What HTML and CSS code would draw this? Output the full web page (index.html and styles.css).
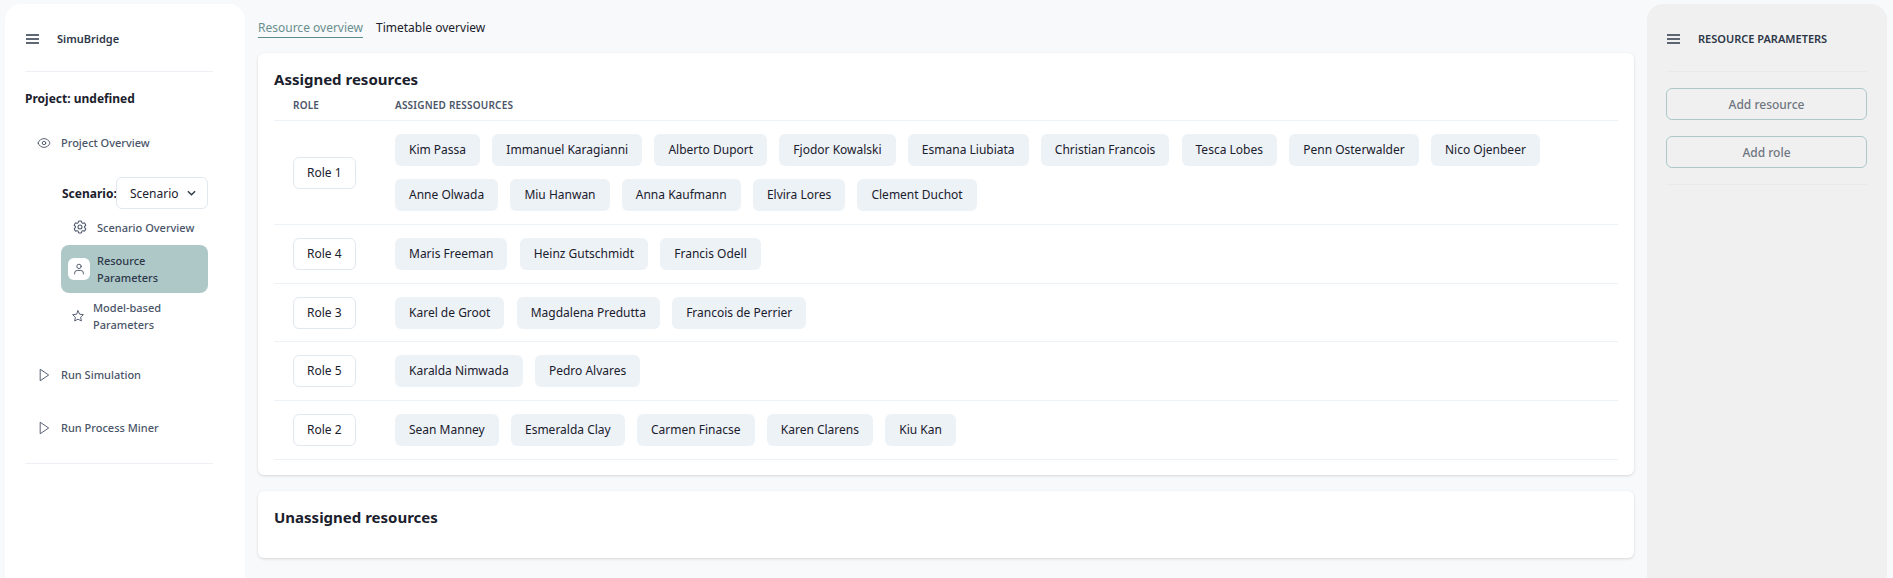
FILE: index.html
```html
<!DOCTYPE html>
<html lang="en">
<head>
    <meta charset="UTF-8">
    <meta name="viewport" content="width=device-width, initial-scale=1.0">
    <title>SimuBridge</title>
    <link rel="stylesheet" href="styles.css">
</head>
<body>
    <div class="app">
        <aside class="sidebar">
            <div class="side-head">
                <svg class="burger" viewBox="0 0 13 10"><path d="M0 1h13M0 5h13M0 9h13"/></svg>
                <span class="brand">SimuBridge</span>
            </div>
            <div class="project">Project: undefined</div>
            <div class="nav-item overview">
                <svg class="nav-icon" viewBox="0 0 24 24"><path d="M2.036 12.322a1.012 1.012 0 010-.639C3.423 7.51 7.36 4.5 12 4.5c4.638 0 8.573 3.007 9.963 7.178.07.207.07.431 0 .639C20.577 16.49 16.64 19.5 12 19.5c-4.638 0-8.573-3.007-9.963-7.178z"/><circle cx="12" cy="12" r="3"/></svg>
                <span>Project Overview</span>
            </div>
            <div class="scenario-row">
                <span class="scenario-label">Scenario:</span>
                <div class="scenario-select">
                    <span class="scenario-value">Scenario 1</span>
                    <svg class="chevron" viewBox="0 0 10 6"><path d="M1 1l4 4 4-4"/></svg>
                </div>
            </div>
            <div class="sub-item gear-item">
                <svg class="nav-icon gear-icon" viewBox="0 0 24 24"><path d="M9.594 3.94c.09-.542.56-.94 1.11-.94h2.593c.55 0 1.02.398 1.11.94l.213 1.281c.063.374.313.686.645.87.074.04.147.083.22.127.324.196.72.257 1.075.124l1.217-.456a1.125 1.125 0 011.37.49l1.296 2.247a1.125 1.125 0 01-.26 1.431l-1.003.827c-.293.24-.438.613-.431.992a6.759 6.759 0 010 .255c-.007.378.138.75.43.99l1.005.828c.424.35.534.954.26 1.43l-1.298 2.247a1.125 1.125 0 01-1.369.491l-1.217-.456c-.355-.133-.75-.072-1.076.124a6.57 6.57 0 01-.22.128c-.331.183-.581.495-.644.869l-.213 1.28c-.09.543-.56.941-1.11.941h-2.594c-.55 0-1.02-.398-1.11-.94l-.213-1.281c-.062-.374-.312-.686-.644-.87a6.52 6.52 0 01-.22-.127c-.325-.196-.72-.257-1.076-.124l-1.217.456a1.125 1.125 0 01-1.369-.49l-1.297-2.247a1.125 1.125 0 01.26-1.431l1.004-.827c.292-.24.437-.613.43-.992a6.932 6.932 0 010-.255c.007-.378-.138-.75-.43-.99l-1.004-.828a1.125 1.125 0 01-.26-1.43l1.297-2.247a1.125 1.125 0 011.37-.491l1.216.456c.356.133.751.072 1.076-.124.072-.044.146-.087.22-.128.332-.183.582-.495.644-.869l.214-1.281z"/><circle cx="12" cy="12" r="3"/></svg>
                <span>Scenario Overview</span>
            </div>
            <div class="sub-item active">
                <span class="icon-box">
                    <svg class="nav-icon" viewBox="0 0 24 24"><circle cx="12" cy="7.500" r="3.750"/><path d="M4.500 20.500v-1.500a4.500 4.500 0 0 1 4.500-4.500h6a4.500 4.500 0 0 1 4.500 4.500v1.500"/></svg>
                </span>
                <span>Resource<br>Parameters</span>
            </div>
            <div class="sub-item star-item">
                <svg class="nav-icon" viewBox="0 0 24 24"><path d="M12 3l2.800 5.900 6.400.8-4.700 4.400 1.200 6.400-5.700-3.100-5.700 3.100 1.200-6.400-4.700-4.400 6.400-.8z"/></svg>
                <span>Model-based<br>Parameters</span>
            </div>
            <div class="nav-item run-sim">
                <svg class="nav-icon" viewBox="0 0 24 24"><path d="M6 2.500l14 9.500-14 9.500z"/></svg>
                <span>Run Simulation</span>
            </div>
            <div class="nav-item run-miner">
                <svg class="nav-icon" viewBox="0 0 24 24"><path d="M6 2.500l14 9.500-14 9.500z"/></svg>
                <span>Run Process Miner</span>
            </div>
            <div class="side-rule"></div>
        </aside>

        <main class="main">
            <div class="tabs">
                <span class="tab tab-active">Resource overview</span>
                <span class="tab">Timetable overview</span>
            </div>

            <section class="card">
                <h2 class="card-title">Assigned resources</h2>
                <div class="table-head">
                    <span class="col-role">ROLE</span>
                    <span>ASSIGNED RESSOURCES</span>
                </div>
                <div class="row">
                    <div class="col-role"><span class="role-tag">Role 1</span></div>
                    <div class="chips">
                        <span class="chip">Kim Passa</span>
                        <span class="chip">Immanuel Karagianni</span>
                        <span class="chip">Alberto Duport</span>
                        <span class="chip">Fjodor Kowalski</span>
                        <span class="chip">Esmana Liubiata</span>
                        <span class="chip">Christian Francois</span>
                        <span class="chip">Tesca Lobes</span>
                        <span class="chip">Penn Osterwalder</span>
                        <span class="chip">Nico Ojenbeer</span>
                        <span class="chip">Anne Olwada</span>
                        <span class="chip">Miu Hanwan</span>
                        <span class="chip">Anna Kaufmann</span>
                        <span class="chip">Elvira Lores</span>
                        <span class="chip">Clement Duchot</span>
                    </div>
                </div>
                <div class="row">
                    <div class="col-role"><span class="role-tag">Role 4</span></div>
                    <div class="chips">
                        <span class="chip">Maris Freeman</span>
                        <span class="chip">Heinz Gutschmidt</span>
                        <span class="chip">Francis Odell</span>
                    </div>
                </div>
                <div class="row">
                    <div class="col-role"><span class="role-tag">Role 3</span></div>
                    <div class="chips">
                        <span class="chip">Karel de Groot</span>
                        <span class="chip">Magdalena Predutta</span>
                        <span class="chip">Francois de Perrier</span>
                    </div>
                </div>
                <div class="row">
                    <div class="col-role"><span class="role-tag">Role 5</span></div>
                    <div class="chips">
                        <span class="chip">Karalda Nimwada</span>
                        <span class="chip">Pedro Alvares</span>
                    </div>
                </div>
                <div class="row">
                    <div class="col-role"><span class="role-tag">Role 2</span></div>
                    <div class="chips">
                        <span class="chip">Sean Manney</span>
                        <span class="chip">Esmeralda Clay</span>
                        <span class="chip">Carmen Finacse</span>
                        <span class="chip">Karen Clarens</span>
                        <span class="chip">Kiu Kan</span>
                    </div>
                </div>
            </section>

            <section class="card card-empty">
                <h2 class="card-title">Unassigned resources</h2>
            </section>
        </main>

        <aside class="params">
            <div class="side-head params-head">
                <svg class="burger" viewBox="0 0 13 10"><path d="M0 1h13M0 5h13M0 9h13"/></svg>
                <span class="brand">RESOURCE PARAMETERS</span>
            </div>
            <div class="param-actions">
                <button class="param-btn">Add resource</button>
                <button class="param-btn">Add role</button>
            </div>
        </aside>
    </div>
</body>
</html>
```

FILE: styles.css
```css
* {
    box-sizing: border-box;
}
html, body {
    height: 100%;
}
body {
    margin: 0;
    background: #f7f9fb;
    color: #1a202c;
    font-family: "Noto Sans", sans-serif;
    font-size: 12px;
    overflow: hidden;
}
.app {
    display: flex;
    height: 578px;
    padding: 4px 6px 0 5px;
}
.sidebar {
    width: 240px;
    flex: none;
    background: white;
    border-radius: 16px 16px 0 0;
    padding: 0 32px 0 20px;
}
.side-head {
    height: 68px;
    display: flex;
    align-items: center;
    gap: 18px;
    padding: 2px 1px 0;
    border-bottom: 1px solid #edf0f4;
}
.burger {
    width: 13px;
    height: 10px;
    flex: none;
    stroke: #2d3748;
    stroke-width: 1.3;
    fill: none;
}
.brand {
    font-size: 11px;
    font-weight: 600;
    color: #2d3748;
}
.project {
    margin-top: 17px;
    font-size: 12px;
    line-height: 20px;
    font-weight: 700;
    color: #1a202c;
}
.nav-item {
    display: flex;
    align-items: center;
    gap: 10px;
    padding-left: 12px;
    font-size: 11px;
    line-height: 18px;
    font-weight: 500;
    color: #4a5568;
}
.overview {
    margin-top: 25px;
}
.run-sim {
    margin-top: 33px;
}
.run-miner {
    margin-top: 35px;
}
.nav-icon {
    width: 14px;
    height: 14px;
    flex: none;
    stroke: #4a5568;
    stroke-width: 1.6;
    fill: none;
    stroke-linejoin: round;
    stroke-linecap: round;
}
.gear-icon {
    width: 16px;
    height: 16px;
}
.scenario-row {
    display: flex;
    align-items: center;
    margin: 25px 5px 0 37px;
}
.scenario-label {
    width: 54px;
    flex: none;
    font-size: 12px;
    font-weight: 700;
}
.scenario-select {
    width: 92px;
    height: 32px;
    flex: none;
    display: flex;
    align-items: center;
    padding: 0 11px 0 13px;
    gap: 5px;
    border: 1px solid #e2e8f0;
    border-radius: 6px;
}
.scenario-value {
    flex: 1;
    overflow: hidden;
    white-space: nowrap;
    font-size: 12px;
}
.chevron {
    width: 9px;
    height: 6px;
    flex: none;
    stroke: #2d3748;
    stroke-width: 1.5;
    fill: none;
}
.sub-item {
    display: flex;
    align-items: center;
    margin: 0 5px 0 36px;
    font-size: 11px;
    line-height: 17px;
    font-weight: 500;
    color: #4a5568;
}
.gear-item {
    margin-top: 9px;
    height: 18px;
    padding-left: 11px;
    gap: 9px;
}
.active {
    margin-top: 9px;
    height: 48px;
    padding-left: 7px;
    gap: 7px;
    background: #aec8c8;
    border-radius: 8px;
    color: #2d3748;
}
.icon-box {
    width: 22px;
    height: 22px;
    flex: none;
    display: flex;
    align-items: center;
    justify-content: center;
    background: white;
    border-radius: 6px;
}
.star-item {
    margin-top: 6px;
    height: 34px;
    padding-left: 10px;
    gap: 8px;
}
.side-rule {
    margin-top: 26px;
    border-top: 1px solid #edf0f4;
}
.main {
    flex: 1;
    min-width: 0;
    padding: 0 13px;
}
.tabs {
    display: flex;
    align-items: flex-start;
    gap: 13px;
    height: 49px;
    padding-top: 14px;
}
.tab {
    height: 20px;
    font-size: 12px;
    line-height: 19px;
    color: #1a202c;
}
.tab-active {
    color: #6a8f8f;
    border-bottom: 1px solid #5d8a8a;
}
.card {
    background: white;
    border-radius: 6px;
    box-shadow: 0 1px 3px rgba(0, 0, 0, 0.14);
    padding: 16px;
    height: 422px;
    margin-bottom: 16px;
}
.card-empty {
    height: 67px;
}
.card-title {
    margin: 0;
    font-size: 15px;
    line-height: 20px;
    font-weight: 700;
    color: #1a202c;
}
.table-head {
    display: flex;
    align-items: center;
    height: 32px;
    border-bottom: 1px solid #edf2f7;
    font-size: 10px;
    font-weight: 600;
    color: #4a5568;
    letter-spacing: 0.2px;
}
.col-role {
    width: 121px;
    flex: none;
    padding-left: 19px;
    display: flex;
}
.row {
    display: flex;
    align-items: center;
    padding: 13px 0 12.75px;
    border-bottom: 1px solid #edf2f7;
}
.role-tag {
    height: 32px;
    line-height: 30px;
    padding: 0 13px;
    border: 1px solid #e2e8f0;
    border-radius: 6px;
    font-size: 12px;
    color: #1a202c;
}
.chips {
    display: flex;
    flex-wrap: wrap;
    gap: 13px 12.25px;
}
.chip {
    height: 32px;
    line-height: 32px;
    padding: 0 14px;
    background: #edf2f7;
    border-radius: 6px;
    font-size: 12px;
    color: #1a202c;
}
.params {
    width: 240px;
    flex: none;
    background: #f0f0f0;
    border-radius: 16px 16px 0 0;
    padding: 0 20px 0 19px;
}
.params-head {
    border-bottom-color: #e9e9e9;
}
.param-actions {
    display: flex;
    flex-direction: column;
    gap: 16px;
    padding: 16px 0;
    border-bottom: 1px solid #e9e9e9;
}
.param-btn {
    height: 32px;
    padding-top: 2px;
    background: transparent;
    border: 1px solid #aec8c8;
    border-radius: 6px;
    font-family: inherit;
    font-size: 12px;
    font-weight: 500;
    color: #6f7680;
}
```
